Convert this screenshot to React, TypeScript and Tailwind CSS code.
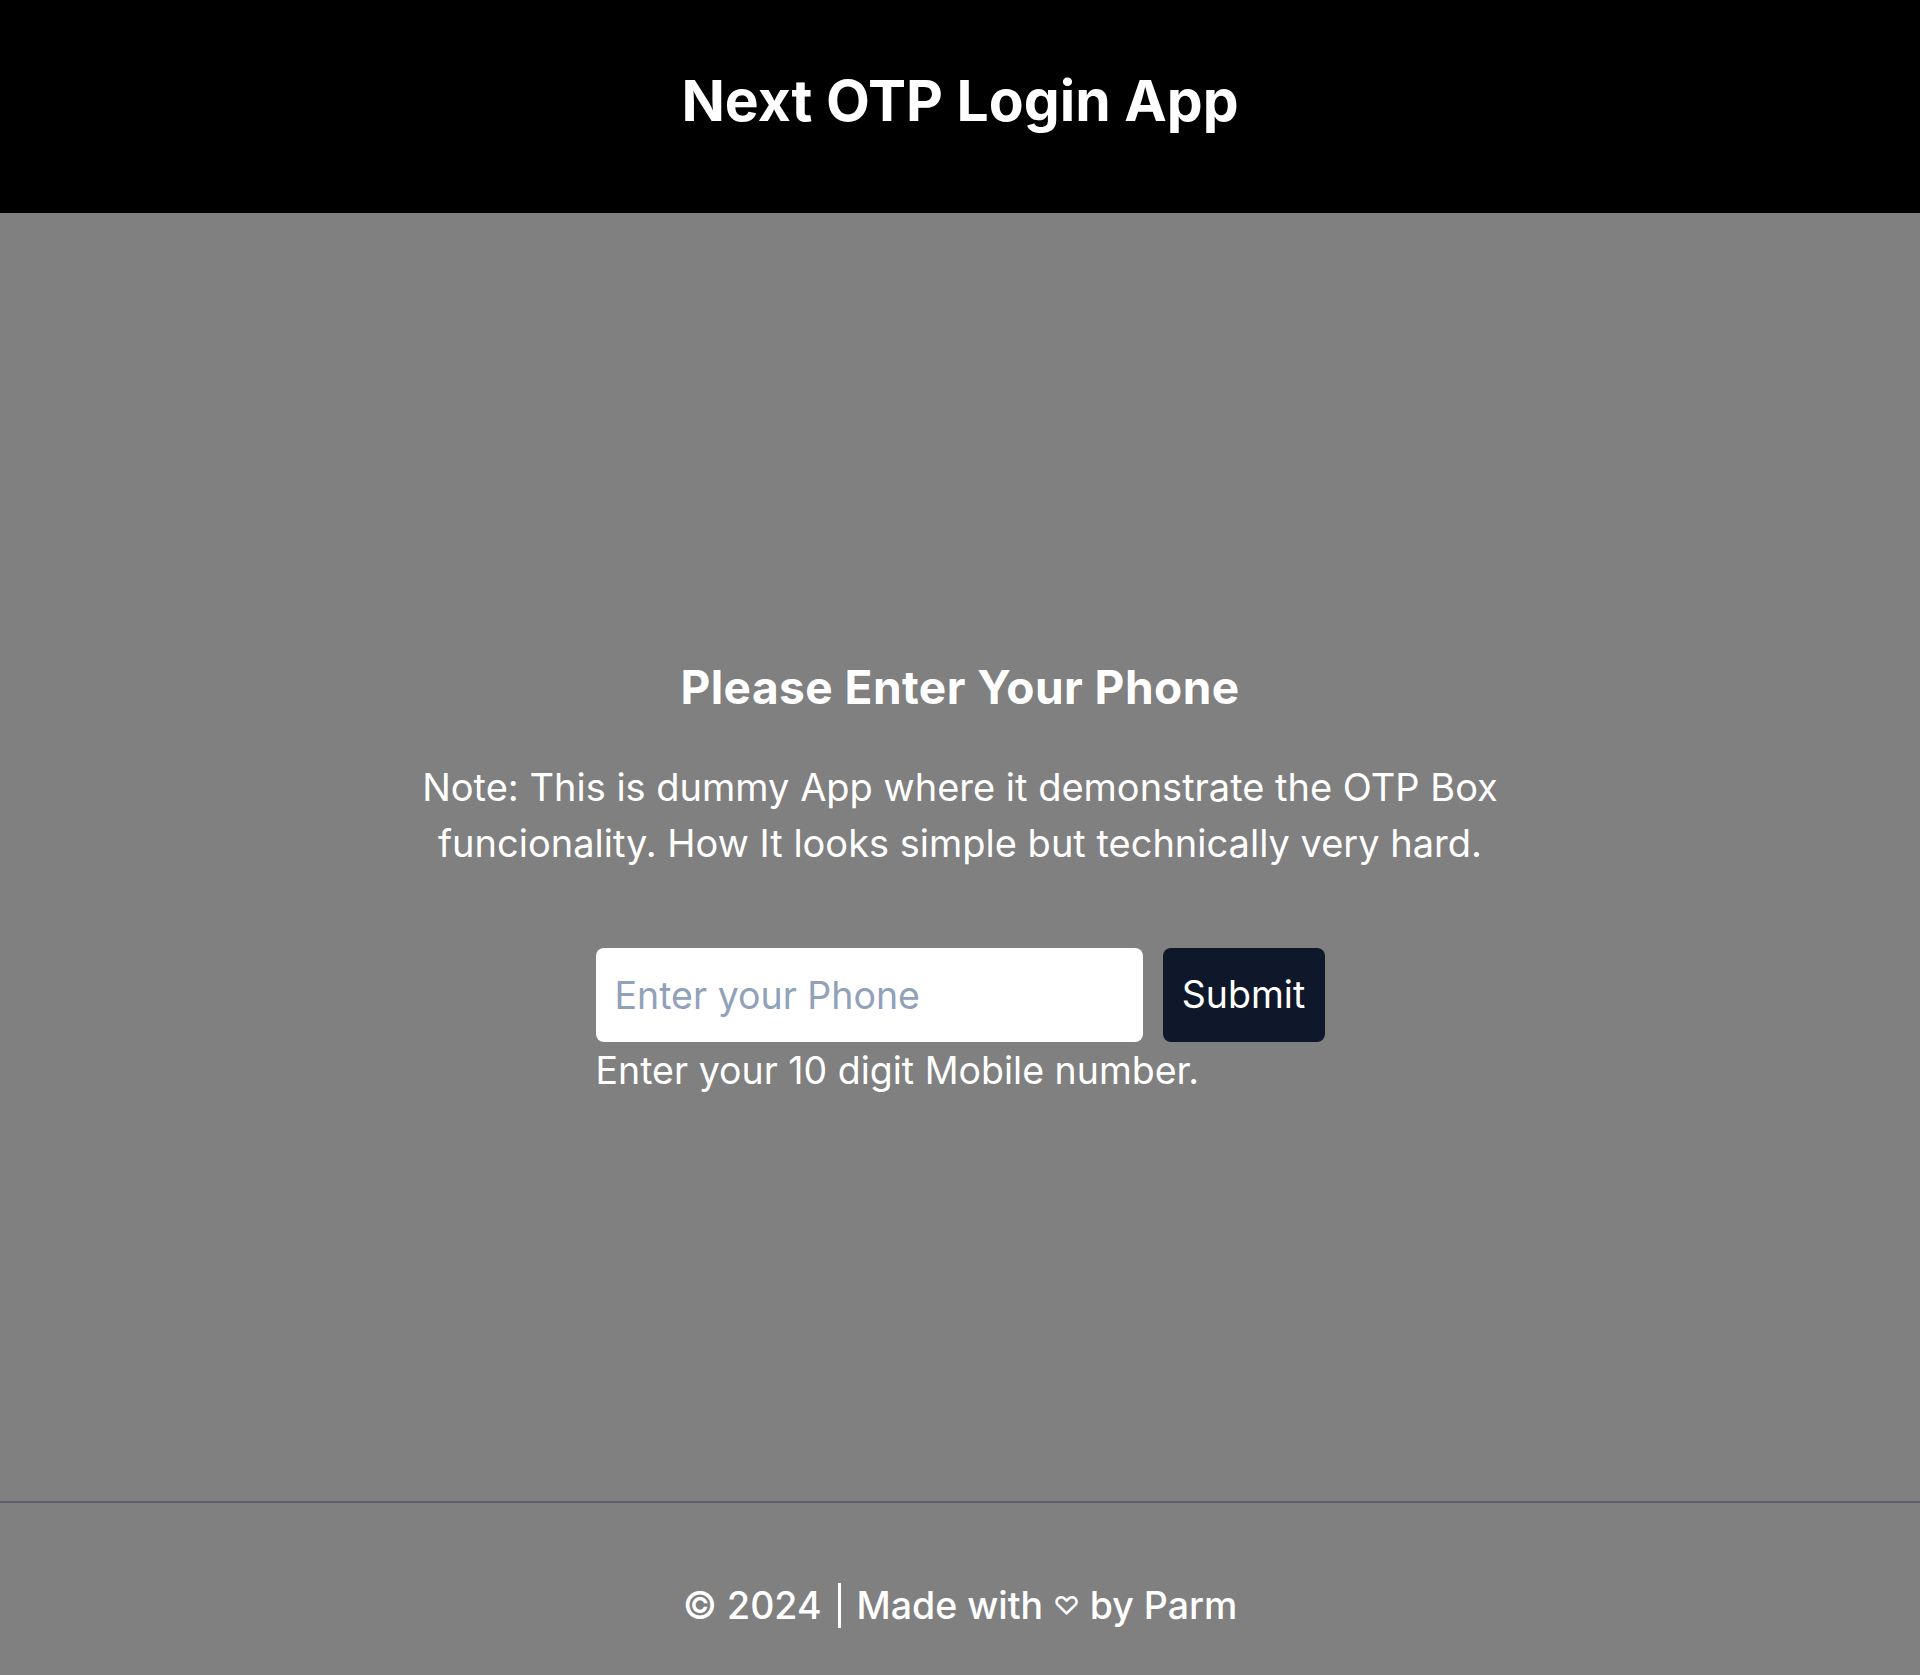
import React from "react";

export default function App() {
  return (
    <div className="min-h-[1675px] flex flex-col bg-[#808080] text-white" style={{ fontFamily: "Inter, 'Noto Sans', sans-serif" }}>
      <header className="h-[213px] bg-black flex justify-center pt-[72px] shrink-0">
        <h1 className="text-[57px] font-bold leading-none">Next OTP Login App</h1>
      </header>
      <main className="flex-1 flex flex-col items-center pt-[451px]">
        <h2 className="text-[46px] font-bold leading-none tracking-[0.01em]">Please Enter Your Phone</h2>
        <p className="mt-[49px] text-[38px] leading-[56px] text-center max-w-[1120px]">
          Note: This is dummy App where it demonstrate the OTP Box funcionality. How It looks simple but technically very hard.
        </p>
        <div className="mt-[77px] flex flex-col items-start">
          <div className="flex gap-[20px]">
            <input
              type="text"
              placeholder="Enter your Phone"
              className="w-[547px] h-[94px] bg-white rounded-lg px-[19px] text-[37.5px] text-slate-900 placeholder:text-slate-400 outline-none"
            />
            <button className="w-[162px] h-[94px] bg-[#0f172a] rounded-lg text-[37.5px] text-white">Submit</button>
          </div>
          <p className="mt-[6px] text-[37.5px] leading-[45px]">Enter your 10 digit Mobile number.</p>
        </div>
      </main>
      <footer className="h-[174px] border-t-[2px] border-[#5c606b] flex justify-center pt-[80px] shrink-0">
        <div className="flex items-center h-[45px] text-[37.5px] font-medium leading-none">
          <span>© 2024</span>
          <span className="mx-[16px] w-[3px] h-[45px] bg-white inline-block"></span>
          <span>Made with</span>
          <span className="mx-[10px] text-[26px]">♡</span>
          <span>by Parm</span>
        </div>
      </footer>
    </div>
  );
}
